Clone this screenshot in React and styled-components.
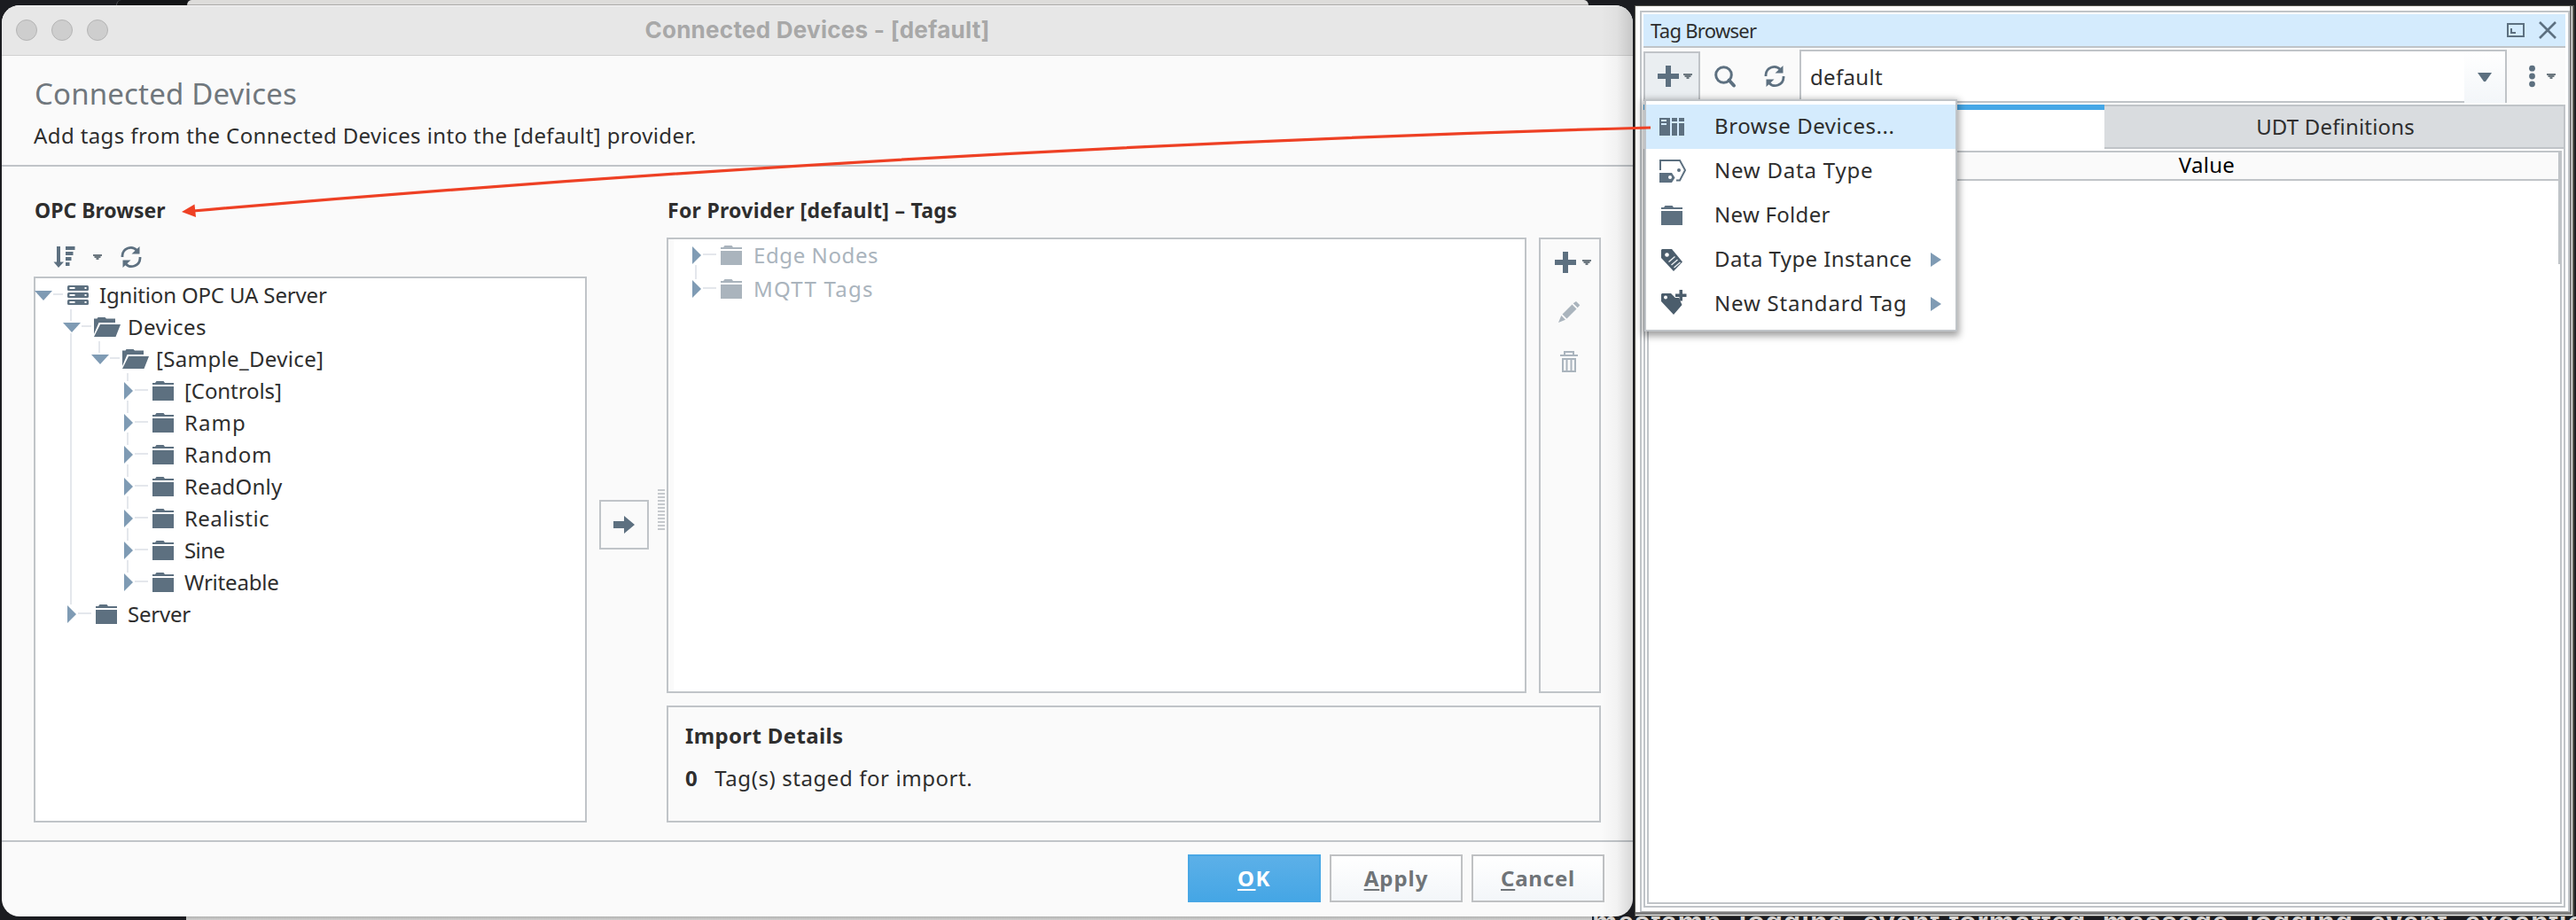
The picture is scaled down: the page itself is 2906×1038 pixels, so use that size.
import React from "react";
import styled, { createGlobalStyle, css } from "styled-components";

const LINE = "#c0c4c8";
const INK = "#2e2e2e";
const SLATE = "#5d7080";
const DIM = "#aab4bd";
const GUIDE = "#e4e7ec";
const TOGGLE = "#7f9bb4";
const PANEL = "#fafafa";

const GlobalStyle = createGlobalStyle`
  * { box-sizing: border-box; }
  body { margin: 0; overflow: hidden; font-family: "Noto Sans", "Open Sans", sans-serif; font-size: 24px; color: ${INK}; }
  svg { display: block; flex: none; overflow: visible; }
  button { font-family: inherit; padding: 0; margin: 0; }
`;

const Desktop = styled.div`
  width: 2906px;
  height: 1038px;
  display: grid;
  grid-template-rows: 6px 1028px 4px;
  background: #1b1c20;
  overflow: hidden;
  position: relative;
`;
const TopStrip = styled.div`
  display: flex;
  padding-left: 131px;
`;
const DarkTab = styled.div`
  width: 80px;
  border-left: 1px solid #55565a;
  border-top-left-radius: 6px;
  background: #141517;
`;
const LightEdge = styled.div`
  width: 1581px;
  background: #dddcda;
  border-bottom: 1px solid #a9a8a6;
  border-radius: 5px 5px 0 0 / 6px 6px 0 0;
`;
const Windows = styled.div`
  display: flex;
  padding-left: 2px;
  gap: 2px;
`;
const BottomStrip = styled.div`
  display: flex;
  padding-left: 210px;
  overflow: hidden;
`;
const LowerEdge = styled.div`
  width: 1586px;
  flex: none;
  background: linear-gradient(#b2b2b1, #d0d0cf);
`;
const LogText = styled.div`
  height: 4px;
  overflow: hidden;
  white-space: pre;
  color: #d6d3d0;
  font: 700 32px/12px "Liberation Sans", sans-serif;
  letter-spacing: 0.8px;
`;

/* ---------- connected devices window ---------- */

const DialogWindow = styled.div`
  position: relative;
  width: 1840px;
  height: 1028px;
  display: flex;
  flex-direction: column;
  background: ${PANEL};
  border-radius: 20px;
  overflow: hidden;
  &::after {
    content: "";
    position: absolute;
    inset: 0 0 0 auto;
    width: 36px;
    background: linear-gradient(to right, rgba(0,0,0,0), rgba(0,0,0,.03) 50%, rgba(0,0,0,.14));
    pointer-events: none;
  }
`;
const TitleBar = styled.div`
  height: 57px;
  flex: none;
  display: grid;
  grid-template-columns: 1fr auto 1fr;
  align-items: center;
  padding: 0 16px 2px;
  background: #e7e7e7;
  border-top: 1px solid #f6f6f6;
  border-bottom: 1px solid #d2d2d2;
`;
const Lights = styled.div`
  display: flex;
  gap: 16px;
`;
const Light = styled.span`
  width: 24px;
  height: 24px;
  border-radius: 50%;
  background: #cecece;
  border: 1px solid #b4b4b4;
`;
const WindowTitle = styled.div`
  font: 700 26px/34px Inter, sans-serif;
  letter-spacing: 0.27px;
  color: #a8a8a8;
`;
const Intro = styled.header`
  height: 125px;
  flex: none;
  padding: 20px 0 0 37px;
  border-bottom: 2px solid ${LINE};
`;
const Heading = styled.h1`
  margin: 0;
  font-size: 33px;
  line-height: 45px;
  font-weight: 400;
  letter-spacing: 0.17px;
  color: #70777d;
`;
const Lead = styled.p`
  margin: 7px 0 0 -1px;
  line-height: 36px;
  letter-spacing: 0.4px;
`;
const Body = styled.div`
  flex: 1;
  display: grid;
  grid-template-columns: 624px 90px 1054px;
  padding: 0 36px 20px;
`;
const Column = styled.section`
  display: flex;
  flex-direction: column;
  padding-top: 31px;
`;
const SectionLabel = styled.h2`
  margin: 0;
  height: 36px;
  flex: none;
  line-height: 36px;
  font-size: 23px;
  font-weight: 700;
  letter-spacing: ${(p) => p.$track || 0}px;
  padding-left: 1px;
`;
const BrowserTools = styled.div`
  height: 57px;
  flex: none;
  display: flex;
  align-items: center;
  padding: 13px 0 0 23px;
`;
const Spacer = styled.span`
  width: ${(p) => p.$w}px;
  flex: none;
`;
const TreeBox = styled.div`
  flex: 1;
  min-height: 0;
  border: 2px solid ${LINE};
  background: #fff;
  padding: ${(p) => (p.$inset ? "1px 0 0 15px" : "2px 0 0")};
  ${(p) => p.$inset && css`box-shadow: inset 6px 0 0 ${PANEL};`}
`;
const TransferColumn = styled.div`
  display: flex;
  align-items: flex-start;
  padding-left: 14px;
`;
const TransferButton = styled.button`
  width: 56px;
  height: 56px;
  margin-top: 376px;
  display: grid;
  place-items: center;
  background: ${PANEL};
  border: 2px solid ${LINE};
`;
const Grip = styled.div`
  width: 8px;
  height: 46px;
  margin: 364px 0 0 10px;
  background: repeating-linear-gradient(#c6c9cd 0 2px, transparent 2px 4px);
`;
const ProviderRow = styled.div`
  display: grid;
  grid-template-columns: 970px 70px;
  gap: 14px;
  height: 514px;
  margin-top: 13px;
`;
const SideTools = styled.div`
  border: 2px solid ${LINE};
  display: flex;
  flex-direction: column;
  align-items: flex-start;
  padding: 14px 0 0 16px;
  gap: 32px;
`;
const ToolGroup = styled.div`
  display: flex;
  align-items: center;
  gap: 7px;
  padding-left: ${(p) => p.$indent || 0}px;
`;
const ImportBox = styled.div`
  height: 132px;
  margin-top: 14px;
  border: 2px solid ${LINE};
  padding: 15px 0 0 19px;
`;
const ImportTitle = styled.h3`
  margin: 0;
  line-height: 34px;
  font-size: 24px;
  letter-spacing: 0.36px;
`;
const ImportLine = styled.div`
  display: flex;
  gap: 19px;
  margin-top: 14px;
  line-height: 34px;
  letter-spacing: 0.58px;
`;
const Footer = styled.footer`
  height: 86px;
  flex: none;
  display: flex;
  justify-content: flex-end;
  gap: 10px;
  padding: 14px 32px 0 0;
  border-top: 2px solid ${LINE};
`;
const FooterButton = styled.button`
  width: 150px;
  height: 54px;
  padding-bottom: 1px;
  font-size: 24px;
  font-weight: 700;
  letter-spacing: ${(p) => p.$track}px;
  color: ${(p) => (p.$primary ? "#fff" : "#6f7478")};
  background: ${(p) => (p.$primary ? "linear-gradient(#5cb0e8, #45a6e5)" : "linear-gradient(#fff, #f3f6f9)")};
  border: 2px solid ${(p) => (p.$primary ? "#48a7e5" : "#bfc1c3")};
`;
const Mnemonic = styled.span`
  text-decoration: underline;
  text-decoration-thickness: 2px;
  text-underline-offset: 3px;
  text-decoration-skip-ink: none;
`;

/* ---------- tree ---------- */

const Row = styled.div`
  display: flex;
  height: ${(p) => p.$h}px;
  margin-left: ${(p) => p.$shift || 0}px;
`;
const GuideCell = styled.span`
  width: 32px;
  flex: none;
  background: ${(p) => (p.$on ? `linear-gradient(${GUIDE}, ${GUIDE}) 15px 0 / 2px 100% no-repeat` : "none")};
`;
const ToggleCell = styled.span`
  width: 32px;
  flex: none;
  display: flex;
  flex-direction: column;
  align-items: flex-start;
`;
const Stem = styled.span`
  width: 2px;
  margin: ${(p) => p.$top || 0}px 0 ${(p) => p.$bottom || 0}px 15px;
  height: ${(p) => p.$len}px;
  flex: none;
  background: ${(p) => (p.$on ? GUIDE : "transparent")};
`;
const Triangle = styled.svg`
  margin-left: ${(p) => p.$x}px;
`;
const Connector = styled.span`
  width: ${(p) => (p.$open ? 11 : 15)}px;
  height: 2px;
  margin: 15px 0 0 ${(p) => (p.$open ? -4 : -8)}px;
  flex: none;
  background: ${GUIDE};
`;
const IconSlot = styled.span`
  width: ${(p) => p.$w}px;
  padding: ${(p) => p.$top}px 0 0 ${(p) => p.$x}px;
  flex: none;
`;
const NodeText = styled.span`
  line-height: 34px;
  white-space: nowrap;
  letter-spacing: ${(p) => p.$track}px;
  color: ${(p) => (p.$dim ? DIM : INK)};
`;

/* ---------- tag browser window ---------- */

const DockWindow = styled.div`
  width: 1060px;
  height: 1028px;
  background: #fff;
  border-style: solid;
  border-width: 1px 2px 1px 1px;
  border-color: #55554e;
  padding: 0 1px 1px 0;
`;
const Bezel = styled.div`
  height: 100%;
  padding: 5px 0 0 5px;
  border-right: 2px solid #7d7d7d;
  border-bottom: 3px solid #7d7d7d;
`;
const Dock = styled.div`
  position: relative;
  height: 100%;
  display: flex;
  flex-direction: column;
  padding: 2px 3px 4px 2px;
  border: 2px solid ${LINE};
  border-bottom: 1px solid #aaa;
`;
const DockHeader = styled.div`
  height: 38px;
  flex: none;
  display: flex;
  align-items: center;
  padding: 0 10px 1px 8px;
  background: #d4ebfd;
  border-bottom: 2px solid ${LINE};
  font-size: 22px;
  letter-spacing: -0.71px;
`;
const HeaderIcons = styled.div`
  margin-left: auto;
  display: flex;
  align-items: center;
  gap: 16px;
`;
const DockTools = styled.div`
  height: 64px;
  flex: none;
  display: flex;
  align-items: flex-start;
  background: ${PANEL};
  padding-top: 2px;
`;
const AddButton = styled.div`
  width: 64px;
  height: 56px;
  margin-top: 2px;
  padding: 14px 0 0 14px;
  display: flex;
  gap: 5px;
  background: #eaeef1;
  border: 2px solid ${LINE};
`;
const ToolIcon = styled.span`
  padding: ${(p) => p.$top}px 0 0 ${(p) => p.$x}px;
`;
const Combo = styled.div`
  width: 798px;
  height: 60px;
  margin-left: 16px;
  display: grid;
  grid-template-columns: 1fr 46px;
  border: 2px solid ${LINE};
  background: #fff;
`;
const ComboValue = styled.span`
  padding-left: 10px;
  line-height: 58px;
  letter-spacing: 0.33px;
`;
const ComboArrow = styled.span`
  padding: 24px 0 0 15px;
  background: linear-gradient(#fff, #f3f6f9);
`;
const TabPane = styled.div`
  flex: 1;
  min-height: 0;
  display: flex;
  flex-direction: column;
  background: #fff;
  border: 2px solid ${LINE};
  border-top: 0;
  padding: 0 2px 2px;
`;
const Tabs = styled.div`
  display: grid;
  grid-template-columns: 520px 520px;
  height: 48px;
  flex: none;
  margin: 0 -4px 4px;
`;
const Tab = styled.div`
  text-align: center;
  letter-spacing: 0.17px;
  line-height: 48px;
  ${(p) =>
    p.$active
      ? css`border-top: 6px solid #46a7e6; background: #fff;`
      : css`border: 2px solid ${LINE}; border-left: 0; background: #d9dcdf; line-height: 46px; padding-left: 3px;`}
`;
const Table = styled.div`
  flex: 1;
  border: 2px solid ${LINE};
`;
const TableHead = styled.div`
  height: 32px;
  display: grid;
  grid-template-columns: 1fr 794px;
  background: ${PANEL};
  border-bottom: 2px solid ${LINE};
  color: #000;
`;
const HeadCell = styled.div`
  text-align: center;
  line-height: 28px;
  padding-right: 3px;
  letter-spacing: 0.27px;
`;
const ColumnHandle = styled.div`
  position: absolute;
  right: 9px;
  top: 158px;
  width: 2px;
  height: 126px;
  background: ${LINE};
`;
const Menu = styled.div`
  position: absolute;
  left: 3px;
  top: 98px;
  width: 353px;
  height: 262px;
  padding-top: 4px;
  background: #fff;
  border: 2px solid ${LINE};
  box-shadow: 0 3px 8px 2px rgba(0, 0, 0, 0.38);
`;
const MenuItem = styled.div`
  height: 50px;
  display: flex;
  align-items: center;
  padding-right: 16px;
  background: ${(p) => (p.$hot ? "#d4ebfd" : "transparent")};
  letter-spacing: ${(p) => p.$track}px;
  white-space: nowrap;
`;
const MenuIcon = styled.span`
  width: 77px;
  flex: none;
  padding-left: ${(p) => p.$x}px;
`;
const MenuText = styled.span`
  flex: 1;
  line-height: 36px;
  padding-bottom: 2px;
`;
const Pointer = styled.svg`
  position: absolute;
  left: 0;
  top: 0;
  pointer-events: none;
`;

/* ---------- icons ---------- */

const Folder = ({ color = SLATE }) => (
  <svg width="24" height="22" fill={color}>
    <path d="M4.5 0h8l1.5 2h10v2H0V2h3z M0 6h24v16H0z" />
  </svg>
);
const OpenFolder = () => (
  <svg width="30" height="22" fill={SLATE}>
    <path d="M4.5 0h8l1.5 1.5h10V6H5.5L0 19V1.5h3.5z M7 8h23l-5.5 14H0z" />
  </svg>
);
const ServerIcon = () => (
  <svg width="24" height="22">
    {[0, 8, 16].map((y) => (
      <g key={y}>
        <rect y={y} width="24" height="6" rx="1.5" fill={SLATE} />
        <rect x="2.5" y={y + 2} width="6" height="2" fill="#fff" />
        <rect x="19.5" y={y + 2} width="2" height="2" fill="#fff" />
      </g>
    ))}
  </svg>
);
const Caret = ({ color = "#6d7880" }) => (
  <svg width="10" height="6" fill={color}>
    <path d="M0 0h10v2H8.5v2H6.5v2h-3V4H1.500V2H0z" />
  </svg>
);
const Plus = () => (
  <svg width="24" height="24" fill={SLATE}>
    <path d="M9 0h6v9h9v6h-9v9H9v-9H0V9h9z" />
  </svg>
);
const Refresh = () => (
  <svg width="24" height="24">
    <path d="M2 12V10.500A9.500 9.500 0 0 1 18.500 4.500M22 12V13.500A9.500 9.500 0 0 1 5.500 19.500" fill="none" stroke={SLATE} strokeWidth="2.800" />
    <path d="M21.500 0V8.500H12.500zM2.500 24V15.500H11.500z" fill={SLATE} />
  </svg>
);
const SortIcon = () => (
  <svg width="24" height="24" fill={SLATE}>
    <path d="M3 0h4v17.500h4L5 24-.5 17.500H3z M13 0h10.500v4H13z M13 6h8.500v4H13z M13 12h6.500v4H13z M13 18h4.500v4H13z" />
  </svg>
);
const SearchIcon = () => (
  <svg width="24" height="24" fill="none" stroke={SLATE}>
    <circle cx="10.500" cy="10.500" r="8.800" strokeWidth="3" />
    <path d="M16.500 16.500L22 22.500" strokeWidth="4" strokeLinecap="round" />
  </svg>
);
const ArrowIcon = () => (
  <svg width="24" height="20" fill={SLATE}>
    <path d="M0 6h12V0l12 10-12 10v-6H0z" />
  </svg>
);
const Pencil = () => (
  <svg width="24" height="24" fill={DIM}>
    <path d="M20 0l4.300 4.300-2.600 3-5-5z M15.500 3.500l5 5L9.500 19.500l-5-5z M3.300 16l4.700 4.700L0 24z" />
  </svg>
);
const Trash = () => (
  <svg width="20" height="24" fill="none" stroke={DIM} strokeWidth="2">
    <path d="M0 5h20M5 4V1h10v3M3 9h14v14H3zM7.500 9v14M12.500 9v14" />
  </svg>
);
const DevicesIcon = () => (
  <svg width="28" height="20">
    <path d="M0 0h12v20H0z M14 0h6v4h-6z M22 0h6v4h-6z M14 6h6v14h-6z M22 6h6v14h-6z" fill={SLATE} />
    <path d="M2 2h6v2H2z M2 6h6v2H2z" fill="#d4ebfd" />
  </svg>
);
const TypeIcon = () => (
  <svg width="30" height="26">
    <path d="M1 12V1h22l6 11-6 11.500h-4" fill="none" stroke={SLATE} strokeWidth="2" />
    <circle cx="22" cy="12" r="2" fill={SLATE} />
    <path d="M0 15h14l3.500 5.500-3.500 5.500H0z" fill={SLATE} />
    <circle cx="12" cy="20" r="2" fill="#fff" />
  </svg>
);
const InstanceIcon = () => (
  <svg width="24" height="25">
    <path d="M0 1l1-1h11l12 14.500L14 25 0 10z" fill="#4b5d6c" />
    <circle cx="6.500" cy="6.500" r="2.300" fill="#fff" />
    <path d="M8.500 14.500l7-6M11.500 18l7-6M14.500 21l7-6" stroke="#e9edf0" strokeWidth="1.500" />
  </svg>
);
const NewTagIcon = () => (
  <svg width="29" height="32">
    <path d="M0 5l1-1h10l5 5h4l3.500 8L14 28 0 13z" fill="#4b5d6c" />
    <circle cx="5" cy="8.500" r="2" fill="#fff" />
    <path d="M20.500 0h3.500v4.500h4.500V8H24v4.500h-3.500V8H16V4.500h4.500z" fill="#4b5d6c" />
  </svg>
);
const SubArrow = () => (
  <svg width="12" height="16" fill={TOGGLE}>
    <path d="M0 0l12 8-12 8z" />
  </svg>
);
const DownArrow = () => (
  <svg width="16" height="10" fill={SLATE}>
    <path d="M0 0h16L9 10H7z" />
  </svg>
);
const Kebab = () => (
  <svg width="7" height="24" fill={SLATE}>
    <circle cx="3.500" cy="3.200" r="3.400" />
    <circle cx="3.500" cy="12" r="3.400" />
    <circle cx="3.500" cy="20.800" r="3.400" />
  </svg>
);
const Restore = () => (
  <svg width="20" height="16" fill="none" stroke={SLATE} strokeWidth="2">
    <path d="M1 1h18v14H1zM5 6v5h5" />
  </svg>
);
const Close = () => (
  <svg width="20" height="20" stroke={SLATE} strokeWidth="2.600">
    <path d="M1 1l18 18M19 1L1 19" />
  </svg>
);

/* ---------- content ---------- */

const opcNodes = [
  { label: "Ignition OPC UA Server", depth: 0, open: true, icon: "server", track: -0.16 },
  { label: "Devices", depth: 1, open: true, icon: "open", track: 0.5, first: true, more: true },
  { label: "[Sample_Device]", depth: 2, open: true, icon: "open", track: 0.35, guides: [1], first: true },
  { label: "[Controls]", depth: 3, track: -0.08, guides: [1], first: true, more: true },
  { label: "Ramp", depth: 3, track: 1.06, guides: [1], more: true },
  { label: "Random", depth: 3, track: 0.7, guides: [1], more: true },
  { label: "ReadOnly", depth: 3, track: 0.22, guides: [1], more: true },
  { label: "Realistic", depth: 3, track: 0.42, guides: [1], more: true },
  { label: "Sine", depth: 3, track: -0.6, guides: [1], more: true },
  { label: "Writeable", depth: 3, track: -0.2, guides: [1] },
  { label: "Server", depth: 1, track: -0.2 },
];
const providerNodes = [
  { label: "Edge Nodes", depth: 0, track: 0.59, dim: true, more: true },
  { label: "MQTT Tags", depth: 0, track: 1.27, dim: true, last: true },
];
const menuItems = [
  { label: "Browse Devices...", icon: <DevicesIcon />, x: 15, track: 0.56, hot: true },
  { label: "New Data Type", icon: <TypeIcon />, x: 15, track: 0.78 },
  { label: "New Folder", icon: <Folder />, x: 17, track: 0.29 },
  { label: "Data Type Instance", icon: <InstanceIcon />, x: 17, track: 0.42, sub: true },
  { label: "New Standard Tag", icon: <NewTagIcon />, x: 17, track: 0.79, sub: true },
];

function TreeNode({ node, height, shift, slot }) {
  const { depth, open, icon, dim, first, more, last, guides = [] } = node;
  const stem = depth > 0;
  const iconX = open && icon === "open" ? 3 : 5;
  return (
    <Row $h={height} $shift={shift}>
      {Array.from({ length: depth }, (_, i) => (
        <GuideCell key={i} $on={guides.includes(i)} />
      ))}
      <ToggleCell>
        {open ? (
          <>
            <Stem $on={stem} $top={first ? -3 : 0} $len={first ? 13 : 10} $bottom={2} />
            <Triangle width="20" height="11" fill={TOGGLE} $x={7}>
              <path d="M0 0h20L10 11z" />
            </Triangle>
          </>
        ) : (
          <>
            <Stem $on={stem || last} $top={first ? -3 : 0} $len={first ? 9 : 6} $bottom={1} />
            <Triangle width="10" height="20" fill={TOGGLE} $x={12}>
              <path d="M0 0l10 10L0 20z" />
            </Triangle>
          </>
        )}
        <Stem $on={more} $top={1} $len={open ? 12 : height - 28} />
      </ToggleCell>
      <Connector $open={open} />
      <IconSlot $w={slot} $x={iconX} $top={6}>
        {icon === "server" ? <ServerIcon /> : icon === "open" ? <OpenFolder /> : <Folder color={dim ? DIM : SLATE} />}
      </IconSlot>
      <NodeText $track={node.track} $dim={dim}>{node.label}</NodeText>
    </Row>
  );
}

function ConnectedDevices() {
  return (
    <DialogWindow>
      <TitleBar>
        <Lights><Light /><Light /><Light /></Lights>
        <WindowTitle>Connected Devices - [default]</WindowTitle>
      </TitleBar>
      <Intro>
        <Heading>Connected Devices</Heading>
        <Lead>Add tags from the Connected Devices into the [default] provider.</Lead>
      </Intro>
      <Body>
        <Column>
          <SectionLabel>OPC Browser</SectionLabel>
          <BrowserTools>
            <SortIcon /><Spacer $w={20} /><Caret /><Spacer $w={21} /><Refresh />
          </BrowserTools>
          <TreeBox>
            {opcNodes.map((n) => (
              <TreeNode key={n.label} node={n} height={36} shift={-8} slot={41} />
            ))}
          </TreeBox>
        </Column>
        <TransferColumn>
          <TransferButton><ArrowIcon /></TransferButton>
          <Grip />
        </TransferColumn>
        <Column>
          <SectionLabel $track={0.29}>For Provider [default] – Tags</SectionLabel>
          <ProviderRow>
            <TreeBox $inset>
              {providerNodes.map((n) => (
                <TreeNode key={n.label} node={n} height={38} slot={42} />
              ))}
            </TreeBox>
            <SideTools>
              <ToolGroup><Plus /><Caret /></ToolGroup>
              <ToolGroup $indent={4}><Pencil /></ToolGroup>
              <ToolGroup $indent={6}><Trash /></ToolGroup>
            </SideTools>
          </ProviderRow>
          <ImportBox>
            <ImportTitle>Import Details</ImportTitle>
            <ImportLine><b>0</b><span>Tag(s) staged for import.</span></ImportLine>
          </ImportBox>
        </Column>
      </Body>
      <Footer>
        <FooterButton $primary $track={1.5}><Mnemonic>O</Mnemonic>K</FooterButton>
        <FooterButton $track={0.98}><Mnemonic>A</Mnemonic>pply</FooterButton>
        <FooterButton $track={0.78}><Mnemonic>C</Mnemonic>ancel</FooterButton>
      </Footer>
    </DialogWindow>
  );
}

function TagBrowser() {
  return (
    <DockWindow>
      <Bezel>
        <Dock>
          <DockHeader>
            Tag Browser
            <HeaderIcons><Restore /><Close /></HeaderIcons>
          </DockHeader>
          <DockTools>
            <AddButton><Plus /><ToolIcon $top={9} $x={0}><Caret /></ToolIcon></AddButton>
            <ToolIcon $top={18} $x={16}><SearchIcon /></ToolIcon>
            <ToolIcon $top={18} $x={32}><Refresh /></ToolIcon>
            <Combo>
              <ComboValue>default</ComboValue>
              <ComboArrow><DownArrow /></ComboArrow>
            </Combo>
            <ToolIcon $top={18} $x={25}><Kebab /></ToolIcon>
            <ToolIcon $top={27} $x={13}><Caret /></ToolIcon>
          </DockTools>
          <TabPane>
            <Tabs>
              <Tab $active />
              <Tab>UDT Definitions</Tab>
            </Tabs>
            <Table>
              <TableHead>
                <HeadCell />
                <HeadCell>Value</HeadCell>
              </TableHead>
            </Table>
          </TabPane>
          <ColumnHandle />
          <Menu>
            {menuItems.map((m) => (
              <MenuItem key={m.label} $hot={m.hot} $track={m.track}>
                <MenuIcon $x={m.x}>{m.icon}</MenuIcon>
                <MenuText>{m.label}</MenuText>
                {m.sub && <SubArrow />}
              </MenuItem>
            ))}
          </Menu>
        </Dock>
      </Bezel>
    </DockWindow>
  );
}

export default function App() {
  return (
    <>
      <GlobalStyle />
      <Desktop>
        <TopStrip><DarkTab /><LightEdge /></TopStrip>
        <Windows>
          <ConnectedDevices />
          <TagBrowser />
        </Windows>
        <BottomStrip>
          <LowerEdge />
          <LogText>mestamp, logging_event.formatted_message, logging_event, exceptio</LogText>
        </BottomStrip>
        <Pointer width="2906" height="1038">
          <path d="M1862 144Q1034 167 218 238" fill="none" stroke="#ee4024" strokeWidth="3.200" />
          <path d="M205 239l14.500-8.500 1.500 14.500z" fill="#ee4024" />
        </Pointer>
      </Desktop>
    </>
  );
}
